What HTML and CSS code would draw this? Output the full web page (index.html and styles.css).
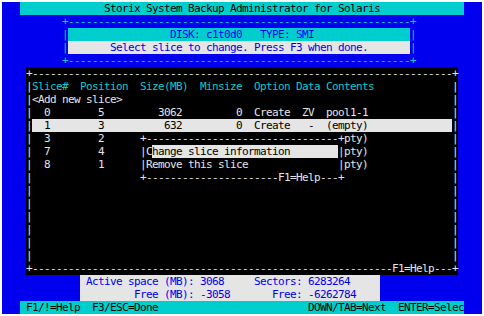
FILE: index.html
```html
<!DOCTYPE html>
<html lang="en">
<head>
    <meta charset="UTF-8">
    <meta name="viewport" content="width=device-width, initial-scale=1.0">
    <title>Storix System Backup Administrator</title>
    <link rel="stylesheet" href="styles.css">
</head>
<body>
    <div class="screen">
        <!-- title bar -->
        <div class="row bar">              Storix System Backup Administrator for Solaris</div>

        <!-- disk dialog -->
        <div class="dialog">
            <div class="row">+---------------------------------------------------------+</div>
            <div class="row"><span>|</span><span class="field info">                 DISK: c1t0d0   TYPE: SMI</span><span>|</span></div>
            <div class="row"><span>|</span><span class="field prompt">       Select slice to change. Press F3 when done.</span><span>|</span></div>
            <div class="row">+---------------------------------------------------------+</div>
        </div>

        <!-- slice list -->
        <div class="slices">
            <div class="row">+----------------------------------------------------------------------+</div>
            <div class="row"><span>|</span><span class="cells head">Slice#  Position  Size(MB)  Minsize  Option Data Contents</span><span>|</span></div>
            <div class="row"><span>|</span><span class="cells">&lt;Add new slice&gt;</span><span>|</span></div>
            <div class="row"><span>|</span><span class="cells">  0        5         3062         0  Create  ZV  pool1-1</span><span>|</span></div>
            <div class="row"><span>|</span><span class="cells sel">  1        3          632         0  Create   -  (empty)</span><span>|</span></div>
            <div class="row"><span>|</span><span class="cells">  3        2      +--------------------------------+pty)</span><span>|</span></div>
            <div class="row"><span>|</span><span class="cells">  7        4      |C<span class="sel">hange slice information        </span>|pty)</span><span>|</span></div>
            <div class="row"><span>|</span><span class="cells">  8        1      |Remove this slice               |pty)</span><span>|</span></div>
            <div class="row"><span>|</span><span class="cells">                  +----------------------F1=Help---+</span><span>|</span></div>
            <div class="row"><span>|</span><span class="cells"></span><span>|</span></div>
            <div class="row"><span>|</span><span class="cells"></span><span>|</span></div>
            <div class="row"><span>|</span><span class="cells"></span><span>|</span></div>
            <div class="row"><span>|</span><span class="cells"></span><span>|</span></div>
            <div class="row"><span>|</span><span class="cells"></span><span>|</span></div>
            <div class="row"><span>|</span><span class="cells"></span><span>|</span></div>
            <div class="row">+------------------------------------------------------------F1=Help---+</div>
        </div>

        <!-- totals -->
        <div class="stats">
            <div class="row"> Active space (MB): 3068     Sectors: 6283264</div>
            <div class="row">         Free (MB): -3058       Free: -6262784</div>
        </div>

        <!-- key help -->
        <div class="row bar"> F1/!=Help  F3/ESC=Done                         DOWN/TAB=Next  ENTER=Selec</div>
    </div>
</body>
</html>
```

FILE: styles.css
```css
body {
    margin: 0;
    background: #fff;
    font-family: "DejaVu Sans Mono", monospace;
    font-size: 11px;
    /* 6px per character cell */
    letter-spacing: -0.6226px;
}

.screen {
    margin: 2px;
    width: 480px;
    height: 312px;
    background: #0000ee;
    display: flex;
    flex-direction: column;
}

.row {
    display: flex;
    height: 13px;
    line-height: 13px;
    white-space: pre;
}

/* Title and key bars */
.bar {
    margin-left: 18px;
    width: 444px;
    background: #00cdcd;
    color: #000;
}

/* Disk dialog */
.dialog {
    margin-left: 60px;
    width: 354px;
    color: #00cdcd;
}

.field {
    flex: 1;
    color: #0000ee;
}

.field.info {
    background: #00cdcd;
}

.field.prompt {
    background: #e5e5e5;
}

/* Slice list */
.slices {
    margin-left: 24px;
    width: 432px;
    background: #000;
    color: #e5e5e5;
}

.cells {
    flex: 1;
}

.head {
    color: #00cdcd;
}

.sel {
    background: #e5e5e5;
    color: #000;
}

/* Totals panel */
.stats {
    margin-left: 78px;
    width: 300px;
    background: #e5e5e5;
    color: #0000ee;
}
```
